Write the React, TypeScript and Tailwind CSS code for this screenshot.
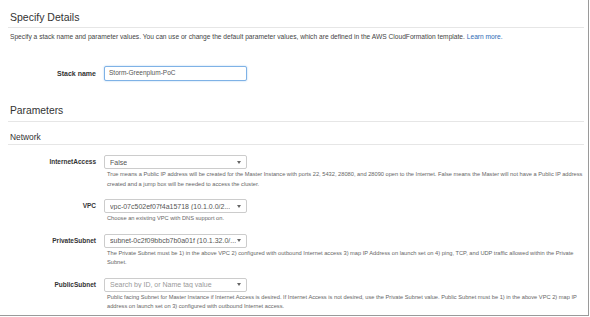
const font = { fontFamily: '"Liberation Sans", Arial, sans-serif' };

function Caret() {
  return (
    <svg width="4" height="3" viewBox="0 0 4 3" className="mr-[1px] shrink-0">
      <path d="M0 0 L4 0 L2 3 Z" fill="#666" />
    </svg>
  );
}

function Select({ value, placeholder, width = "w-[143px]" }: { value: string; placeholder?: boolean; width?: string }) {
  return (
    <div
      className={`flex h-[14px] ${width} items-center justify-between rounded-[2px] border border-[#ccc] bg-white pl-[5px] pr-[4px]`}
    >
      <span className={`truncate text-[7px] leading-none ${placeholder ? "text-[#999]" : "text-[#555]"}`}>{value}</span>
      <Caret />
    </div>
  );
}

function Param({ label, children, help }: { label: string; children: React.ReactNode; help: React.ReactNode }) {
  return (
    <div className="flex">
      <div className="w-[96px] shrink-0 pt-[3px] text-right text-[6.5px] font-bold leading-[8px] text-[#333]">{label}</div>
      <div className="ml-[8px] flex-1">
        {children}
        <p className="mt-[1px] pl-[3px] pr-[2px] text-[5.7px] leading-[9.5px] text-[#666]">{help}</p>
      </div>
    </div>
  );
}

export default function App() {
  return (
    <div className="h-[317px] w-[590px] overflow-hidden bg-white" style={font}>
      <div className="h-[316px] w-[589px] border-b border-r border-[#9a9a9a]">
        <h1 className="pl-[10px] pt-[10px] text-[10.5px] leading-[14px] text-[#333]">Specify Details</h1>
        <div className="ml-[8px] mr-[4px] mt-[3px] h-[1px] bg-[#e6e6e6]" />
        <p className="mt-[4px] pl-[10px] text-[6.65px] leading-[9px] text-[#444]">
          Specify a stack name and parameter values. You can use or change the default parameter values, which are
          defined in the AWS CloudFormation template. <span className="text-[#2d6bb5]">Learn more.</span>
        </p>

        <div className="mt-[25px] flex items-center">
          <div className="w-[96px] text-right text-[7px] font-bold leading-[9px] text-[#333]">Stack name</div>
          <div className="ml-[8px] flex h-[15px] w-[143px] items-center rounded-[2px] border border-[#7fb2e6] bg-white pl-[4px] shadow-[0_0_2px_#a9cdf0]">
            <span className="text-[6.5px] leading-none text-[#555]">Storm-Greenplum-PoC</span>
          </div>
        </div>

        <h2 className="mt-[23px] pl-[10px] text-[10.3px] leading-[14px] text-[#333]">Parameters</h2>
        <div className="ml-[8px] mr-[4px] mt-[3px] h-[1px] bg-[#e6e6e6]" />
        <h3 className="mt-[10px] pl-[10px] text-[8.4px] leading-[10px] text-[#333]">Network</h3>
        <div className="ml-[8px] mr-[4px] mt-[2px] h-[1px] bg-[#e6e6e6]" />

        <div className="mt-[10px] flex flex-col gap-[10px]">
          <Param
            label="InternetAccess"
            help={
              <>
                True means a Public IP address will be created for the Master Instance with ports 22, 5432, 28080, and 28090
                open to the Internet. False means the Master will not have a Public IP address created and a jump box will be
                needed to access the cluster.
              </>
            }
          >
            <Select value="False" />
          </Param>
          <Param label="VPC" help="Choose an existing VPC with DNS support on.">
            <Select value="vpc-07c502ef07f4a15718 (10.1.0.0/2..." />
          </Param>
          <Param
            label="PrivateSubnet"
            help="The Private Subnet must be 1) in the above VPC 2) configured with outbound Internet access 3) map IP Address on launch set on 4) ping, TCP, and UDP traffic allowed within the Private Subnet."
          >
            <Select value="subnet-0c2f09bbcb7b0a01f (10.1.32.0/..." />
          </Param>
          <Param
            label="PublicSubnet"
            help="Public facing Subnet for Master Instance if Internet Access is desired. If Internet Access is not desired, use the Private Subnet value. Public Subnet must be 1) in the above VPC 2) map IP address on launch set on 3) configured with outbound Internet access."
          >
            <Select value="Search by ID, or Name tag value" placeholder />
          </Param>
        </div>
      </div>
    </div>
  );
}
